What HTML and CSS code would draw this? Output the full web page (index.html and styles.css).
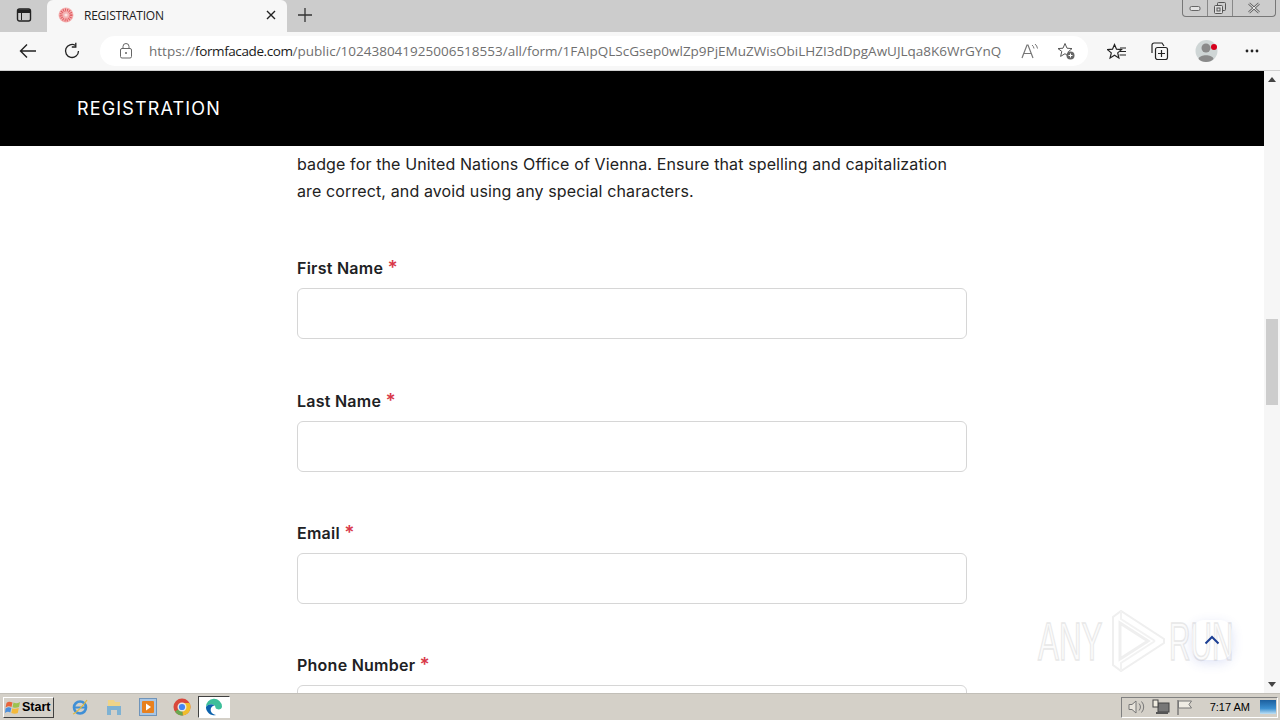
FILE: index.html
```html
<!DOCTYPE html>
<html lang="en">
<head>
    <meta charset="UTF-8">
    <title>REGISTRATION</title>
    <link rel="stylesheet" href="styles.css">
</head>
<body>
    <!-- Browser tab strip -->
    <div class="tabbar">
        <svg class="tab-actions" width="16" height="16" viewBox="0 0 16 16"><rect x="1.5" y="2" width="13" height="12" rx="2" fill="none" stroke="#222" stroke-width="1.4"/><path d="M2 3h12v2.5H2zM5.5 5.5V13" fill="#222" stroke="#222"/></svg>
        <div class="tab">
            <svg class="favicon" width="16" height="16" viewBox="0 0 16 16"><circle cx="8" cy="8" r="7.5" fill="#f4b4b4"/><circle cx="8" cy="8" r="5" fill="none" stroke="#e25d62" stroke-width="3" stroke-dasharray="1 1"/><circle cx="8" cy="8" r="1.6" fill="#fbe3e3"/></svg>
            <span class="tab-title">REGISTRATION</span>
            <svg width="10" height="10" viewBox="0 0 10 10"><path d="M1 1l8 8M9 1L1 9" stroke="#222" stroke-width="1.4"/></svg>
        </div>
        <svg class="new-tab" width="16" height="16" viewBox="0 0 16 16"><path d="M8 1v14M1 8h14" stroke="#333" stroke-width="1.3"/></svg>
        <div class="window-buttons">
            <span class="win-btn win-min"><svg width="12" height="8" viewBox="0 0 12 8"><rect x="1" y="2.5" width="10" height="4" rx="1.5" fill="#e4e4e4" stroke="#666"/></svg></span>
            <span class="win-btn win-max"><svg width="14" height="14" viewBox="0 0 14 14"><rect x="4.5" y="1.5" width="8" height="8" rx="1" fill="none" stroke="#555"/><rect x="1.5" y="4.5" width="8" height="8" rx="1" fill="#ddd" stroke="#555"/><rect x="4" y="7" width="3" height="3" fill="none" stroke="#555"/></svg></span>
            <span class="win-btn win-close"><svg width="14" height="12" viewBox="0 0 14 12"><path d="M2 1.5l10 9M12 1.5l-10 9" stroke="#666" stroke-width="2.6"/><path d="M2 1.5l10 9M12 1.5l-10 9" stroke="#eee" stroke-width="1"/></svg></span>
        </div>
    </div>

    <!-- Address bar row -->
    <div class="toolbar">
        <svg class="nav-back" width="18" height="16" viewBox="0 0 18 16"><path d="M17 8H1.5M8 1.5L1.5 8 8 14.5" fill="none" stroke="#222" stroke-width="1.4"/></svg>
        <svg class="nav-reload" width="18" height="18" viewBox="0 0 18 18"><path d="M15.5 9A6.5 6.5 0 1 1 12.5 3.5" fill="none" stroke="#222" stroke-width="1.3"/><path d="M12.8 .8v4.2H8.8" fill="none" stroke="#222" stroke-width="1.3"/></svg>
        <div class="address">
            <svg class="lock" width="14" height="16" viewBox="0 0 14 16"><rect x="1.5" y="5.5" width="11" height="9.5" rx="1.5" fill="none" stroke="#666"/><path d="M4 5.5V3.5a3 3 0 0 1 6 0v2" fill="none" stroke="#666"/><circle cx="7" cy="10" r="1" fill="#666"/></svg>
            <span class="url">https://<b>formfacade.com</b>/public/102438041925006518553/all/form/1FAIpQLScGsep0wlZp9PjEMuZWisObiLHZI3dDpgAwUJLqa8K6WrGYnQ</span>
            <svg class="read-aloud" width="18" height="16" viewBox="0 0 18 16"><path d="M1 15L6 2h1l5 13M3 10.500h7" fill="none" stroke="#777" stroke-width="1.2"/><path d="M11 2a5 5 0 0 1 2 3.500M14 1a7 7 0 0 1 2.500 4.500" fill="none" stroke="#777"/></svg>
            <svg class="fav-add" width="18" height="18" viewBox="0 0 18 18"><path d="M8 1.500l2 4.700 5 .4-3.800 3.300 1.200 5L8 11.700 3.600 14.400l1.200-5L1 6.600l5-.4z" fill="none" stroke="#555"/><circle cx="13.500" cy="13.500" r="4" fill="#666"/><path d="M13.500 11.500v4M11.500 13.500h4" stroke="#fff"/></svg>
        </div>
        <svg class="tool-icon" width="20" height="18" viewBox="0 0 20 18"><path d="M7.500 1.500l2 4.700 5 .4-3.800 3.300 1.200 5-4.400-2.700-4.400 2.700 1.200-5L.5 6.600l5-.4z" fill="none" stroke="#222" stroke-width="1.200" transform="translate(0 1)"/><path d="M13 6h6M13 9.500h6M12.500 13h6.500" stroke="#222" stroke-width="1.200"/></svg>
        <svg class="tool-icon tool-collections" width="18" height="18" viewBox="0 0 18 18"><path d="M1 11V3a2 2 0 0 1 2-2h8l2 3" fill="none" stroke="#222" stroke-width="1.200"/><rect x="4.500" y="5.500" width="12" height="12" rx="2" fill="#f7f7f7" stroke="#222" stroke-width="1.200"/><path d="M10.500 8v7M7 11.500h7" stroke="#222" stroke-width="1.200"/></svg>
        <svg class="avatar" width="24" height="24" viewBox="0 0 24 24"><circle cx="11.500" cy="12" r="11" fill="#cfd6d6"/><circle cx="11" cy="9" r="4.500" fill="#8a8a8a"/><path d="M3.500 20c1-5 14-5 15 0-3 4-12 4-15 0z" fill="#8a8a8a"/><circle cx="19" cy="8" r="3" fill="#d6001c"/></svg>
        <svg class="more" width="14" height="4" viewBox="0 0 14 4"><circle cx="2" cy="2" r="1.400" fill="#222"/><circle cx="7" cy="2" r="1.400" fill="#222"/><circle cx="12" cy="2" r="1.400" fill="#222"/></svg>
    </div>

    <!-- Page content -->
    <div class="viewport">
        <div class="page">
            <div class="page-header">REGISTRATION</div>
            <div class="form">
                <p class="intro">badge for the United Nations Office of Vienna. Ensure that spelling and capitalization are correct, and avoid using any special characters.</p>
                <div class="field field-first">
                    <label class="field-label">First Name <span class="req">*</span></label>
                    <input class="field-input" type="text">
                </div>
                <div class="field">
                    <label class="field-label">Last Name <span class="req">*</span></label>
                    <input class="field-input" type="text">
                </div>
                <div class="field">
                    <label class="field-label">Email <span class="req">*</span></label>
                    <input class="field-input" type="text">
                </div>
                <div class="field">
                    <label class="field-label">Phone Number <span class="req">*</span></label>
                    <input class="field-input" type="text">
                </div>
            </div>
        </div>

        <div class="scrollbar">
            <span class="arrow-up"></span>
            <div class="track"><div class="thumb"></div></div>
            <span class="arrow-down"></span>
        </div>

        <!-- Sandbox watermark -->
        <div class="watermark">
            <span class="wm-word wm-any">ANY</span>
            <svg class="wm-logo" width="58" height="64" viewBox="0 0 58 64"><path d="M12 14v36l28-18z" fill="none" stroke="#efefef" stroke-width="3"/><path d="M5 8v48l8 6 43-28v-4L13 2z" fill="none" stroke="#efefef" stroke-width="2"/><path d="M13 2v8l34 22M13 62v-8l34-22" fill="none" stroke="#f2f2f2" stroke-width="2"/></svg>
            <span class="wm-word wm-run">RUN</span>
        </div>
        <div class="to-top">
            <svg width="16" height="10" viewBox="0 0 16 10"><path d="M1.500 8.500L8 2l6.500 6.500" fill="none" stroke="#1c3f94" stroke-width="2"/></svg>
        </div>
    </div>

    <!-- Windows taskbar -->
    <div class="taskbar">
        <div class="start">
            <svg width="16" height="16" viewBox="0 0 16 16"><path d="M1.500 4C3 2.500 5 2.500 7.500 3.500L6.500 8C4.500 7 3 7 .5 8.500z" fill="#e8643a"/><path d="M8.500 3.500c2 1 4 1 6.500-.5l-1 5c-2 1-4 1-6.500.2z" fill="#9cc24f"/><path d="M.5 9.500C3 8 4.500 8 6.300 9l-1 4.500C3.500 12.500 2 12.500 0 14z" fill="#4b8fdc"/><path d="M7.300 9.300c2 .8 4 .7 6.500-.2l-1 5c-2 1-4 1-6.500 0z" fill="#f4b93a"/></svg>
            <span>Start</span>
        </div>
        <div class="quick">
            <svg width="18" height="18" viewBox="0 0 18 18"><circle cx="9" cy="9.500" r="6" fill="none" stroke="#3f8fd6" stroke-width="2.600"/><path d="M4 9.500h10" stroke="#3f8fd6" stroke-width="2"/><path d="M2 16c3-1 10-8 14-14" fill="none" stroke="#e0b93c" stroke-width="1.300"/></svg>
            <svg width="18" height="18" viewBox="0 0 18 18"><path d="M3 2h6l1 2h5v5H3z" fill="#efd488"/><path d="M2 8h14v9h-4v-5H6v5H2z" fill="#7fb2d3"/></svg>
            <svg width="18" height="18" viewBox="0 0 18 18"><rect x=".5" y=".5" width="17" height="17" fill="#a9c6e4" stroke="#6f94ba"/><rect x="3" y="3" width="12" height="12" rx="1" fill="#e8811f"/><path d="M7 5.500l5 3.500-5 3.500z" fill="#fff"/></svg>
            <svg width="18" height="18" viewBox="0 0 18 18"><circle cx="9" cy="9" r="8.500" fill="#d9483b"/><path d="M9 9L2 13.500A8.500 8.500 0 0 0 10 17.500z" fill="#6aa84f"/><path d="M9 9l1 8.500A8.500 8.500 0 0 0 16.500 5H9z" fill="#f0bd2c"/><circle cx="9" cy="9" r="3.800" fill="#4285f4" stroke="#e8e8e8" stroke-width="1.400"/></svg>
            <span class="task-active">
                <svg width="18" height="18" viewBox="0 0 18 18"><path d="M1 9a8 8 0 0 1 16-.5c0 2.500-3 3.500-5 2.500-2-.5-1-2-2.500-3.500C7 5.500 3 6 1 9z" fill="#3dbf9a"/><path d="M1 9c2-3 6-3.500 8.500-1.500-3 .5-4.500 3-3.500 6 .7 2 2.500 3 5 3.500A8 8 0 0 1 1 9z" fill="#0c62ad"/></svg>
            </span>
        </div>
        <div class="tray">
            <svg width="18" height="16" viewBox="0 0 18 16"><path d="M1 5.500h3L8 2v12l-4-3.500H1z" fill="#e8e4dc" stroke="#777"/><path d="M11 4.500a5 5 0 0 1 0 7M13.500 2.500a8 8 0 0 1 0 11" fill="none" stroke="#777"/></svg>
            <svg width="18" height="16" viewBox="0 0 18 16"><rect x="6" y="4" width="11" height="9" fill="#777" stroke="#444"/><rect x="1" y="1" width="5" height="7" fill="#f0ece0" stroke="#444"/><path d="M4 13h12v2H4z" fill="#555"/></svg>
            <svg width="18" height="16" viewBox="0 0 18 16"><path d="M2 1v15" stroke="#666" stroke-width="1.200"/><path d="M2.500 2h13l-2.500 3.500 2.500 3.500h-13z" fill="#efece4" stroke="#777"/></svg>
            <span class="clock">7:17 AM</span>
            <svg class="show-desktop" width="16" height="14" viewBox="0 0 16 14"><defs><linearGradient id="desk" x1="0" y1="0" x2="0" y2="1"><stop offset="0" stop-color="#1c5f9e"/><stop offset=".6" stop-color="#3b8fd0"/><stop offset="1" stop-color="#bfe0f5"/></linearGradient></defs><rect width="16" height="14" fill="url(#desk)"/></svg>
        </div>
    </div>
</body>
</html>
```

FILE: styles.css
```css
* {
    box-sizing: border-box;
}

html, body {
    margin: 0;
    height: 100%;
    overflow: hidden;
}

body {
    display: flex;
    flex-direction: column;
    height: 720px;
    font-family: Inter, "Liberation Sans", sans-serif;
    background-color: #fff;
}

/* Browser tabs */
.tabbar {
    flex: none;
    display: flex;
    align-items: center;
    height: 32px;
    background-color: #cccccc;
    padding: 0 0 2px 16px;
}

.tab-actions {
    margin-right: 15px;
}

.tab {
    display: flex;
    align-items: center;
    align-self: stretch;
    width: 240px;
    margin-bottom: -2px;
    padding: 0 11px 2px 11px;
    background-color: #f7f7f7;
    border-radius: 6px 6px 0 0;
}

.favicon {
    margin-right: 10px;
}

.tab-title {
    flex: 1;
    font-family: "Open Sans", sans-serif;
    font-size: 12px;
    letter-spacing: -0.25px;
    color: #222;
}

.new-tab {
    margin-left: 10px;
}

.window-buttons {
    display: flex;
    align-self: flex-start;
    margin-left: auto;
    margin-right: 4px;
    height: 17px;
    border: 1px solid #777;
    border-top: none;
    border-radius: 0 0 4px 4px;
}

.win-btn {
    display: flex;
    align-items: center;
    justify-content: center;
    height: 16px;
    border-right: 1px solid #888;
}

.win-min {
    width: 25px;
}

.win-max {
    width: 25px;
}

.win-close {
    width: 42px;
    border-right: none;
}

/* Address bar */
.toolbar {
    flex: none;
    display: flex;
    align-items: center;
    height: 39px;
    padding-left: 19px;
    background-color: #f7f7f7;
    border-bottom: 1px solid #d0d0d0;
}

.nav-reload {
    margin-left: 26px;
}

.address {
    display: flex;
    align-items: center;
    width: 988px;
    height: 30px;
    margin-left: 19px;
    padding: 0 13px 0 19px;
    background-color: #fff;
    border-radius: 15px;
}

.lock {
    margin-right: 16px;
}

.url {
    flex: 1;
    white-space: nowrap;
    overflow: hidden;
    font-family: "Open Sans", sans-serif;
    font-size: 13.5px;
    color: #6f6f6f;
}

.url b {
    font-weight: 400;
    letter-spacing: -0.4px;
    color: #1a1a1a;
}

.read-aloud {
    margin: 0 18px 0 8px;
}

.tool-icon {
    margin-left: 19px;
}

.tool-collections {
    margin-left: 24px;
}

.avatar {
    margin-left: 26px;
}

.more {
    margin-left: 26px;
}

/* Page area */
.viewport {
    flex: 1;
    position: relative;
    display: flex;
    min-height: 0;
    overflow: hidden;
}

.page {
    flex: 1;
    overflow: hidden;
}

.page-header {
    height: 75px;
    line-height: 75px;
    padding-left: 77px;
    background-color: #000;
    color: #fff;
    font-size: 18px;
    letter-spacing: 1.15px;
}

.form {
    width: 670px;
    margin-left: 297px;
}

.intro {
    margin: 5px 0 0;
    font-size: 16px;
    letter-spacing: 0.12px;
    line-height: 27px;
    color: #222;
}

.field {
    margin-top: 48.4px;
}

.field-first {
    margin-top: 50.2px;
}

.field-label {
    display: block;
    height: 33px;
    line-height: 27px;
    font-size: 16px;
    font-weight: 600;
    letter-spacing: 0.25px;
    color: #202124;
}

.req {
    font-size: 19px;
    line-height: 19px;
    letter-spacing: 0;
    color: #d93a4a;
}

.field-input {
    display: block;
    width: 670px;
    height: 51px;
    background-color: #fff;
    border: 1px solid #d6d6d6;
    border-radius: 6px;
}

.scrollbar {
    flex: none;
    display: flex;
    flex-direction: column;
    align-items: center;
    width: 16px;
    background-color: #f6f6f6;
}

.arrow-up {
    margin-top: 6px;
    border: 4px solid transparent;
    border-top: none;
    border-bottom: 5px solid #444;
}

.arrow-down {
    margin-bottom: 6px;
    border: 4px solid transparent;
    border-bottom: none;
    border-top: 5px solid #444;
}

.track {
    flex: 1;
    width: 100%;
    padding: 237px 2px 0;
}

.thumb {
    height: 86px;
    background-color: #cdcdcd;
}

/* Overlays */
.watermark {
    position: absolute;
    left: 1038px;
    top: 538px;
    display: flex;
    align-items: center;
    width: 195px;
    height: 64px;
    font-family: "Liberation Sans", sans-serif;
    font-size: 54px;
    line-height: 64px;
    color: #fbfbfb;
    -webkit-text-stroke: 1.5px #e8e8e8;
}

.wm-word {
    display: block;
    width: 65px;
    white-space: nowrap;
    transform-origin: 0 50%;
}

.wm-any {
    transform: scaleX(0.58);
}

.wm-run {
    transform: scaleX(0.55);
}

.wm-logo {
    flex: none;
    margin: 0 3px 0 5px;
}

.to-top {
    position: absolute;
    left: 1192px;
    top: 549px;
    display: flex;
    align-items: center;
    justify-content: center;
    width: 40px;
    height: 40px;
    border-radius: 12px;
    box-shadow: 0 3px 12px rgba(60, 90, 200, 0.16);
}

/* Taskbar */
.taskbar {
    flex: none;
    display: flex;
    align-items: center;
    height: 27px;
    background-color: #d4d0c8;
    border-top: 1px solid #c2bfb8;
}

.start {
    display: flex;
    align-items: center;
    gap: 1px;
    width: 51px;
    height: 21px;
    margin-left: 3px;
    padding-left: 1px;
    background-color: #d4d0c8;
    border: 1px solid;
    border-color: #fff #404040 #404040 #fff;
    font-family: "Liberation Sans", sans-serif;
    font-size: 12.5px;
    font-weight: 700;
    color: #000;
}

.quick {
    display: flex;
    align-items: center;
    gap: 16px;
    margin-left: 17px;
}

.task-active {
    display: flex;
    align-items: center;
    justify-content: center;
    width: 32px;
    height: 22px;
    margin-left: -9px;
    background-color: #fff;
    border: 1px solid;
    border-color: #404040 #fff #fff #404040;
}

.tray {
    display: flex;
    align-items: center;
    gap: 6px;
    height: 21px;
    margin-left: auto;
    margin-right: 2px;
    padding: 0 1px 0 6px;
    border: 1px solid;
    border-color: #808080 #fff #fff #808080;
}

.clock {
    margin: 0 4px 0 10px;
    font-family: "Liberation Sans", sans-serif;
    font-size: 11px;
    color: #000;
}
```
